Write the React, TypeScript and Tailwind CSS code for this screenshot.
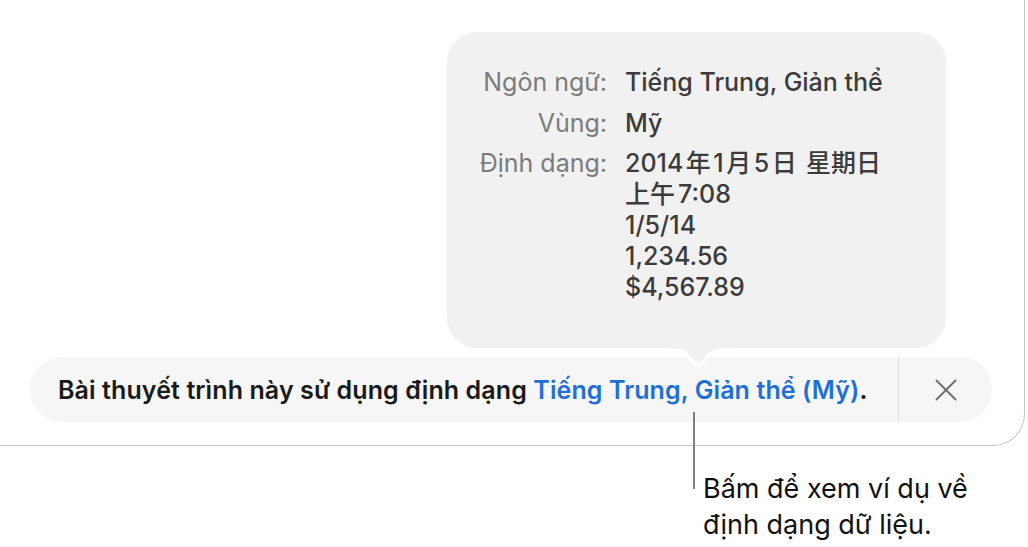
import { Fragment, type ReactNode } from "react"

// CJK glyphs get a little breathing room next to Latin digits
function Cjk({ children }: { children: ReactNode }) {
  return <span className="mx-[2.5px]">{children}</span>
}

const rows: { label: string; values: ReactNode[] }[] = [
  { label: "Ngôn ngữ:", values: ["Tiếng Trung, Giản thể"] },
  { label: "Vùng:", values: ["Mỹ"] },
  {
    label: "Định dạng:",
    values: [
      <>
        2014<Cjk>年</Cjk>1<Cjk>月</Cjk>5<Cjk>日</Cjk> 星期日
      </>,
      <>
        <span className="mr-[3px]">上午</span>7:08
      </>,
      "1/5/14",
      "1,234.56",
      "$4,567.89",
    ],
  },
]

function PopoverArrow() {
  return (
    <svg
      className="absolute left-[217px] top-[312px]"
      width="68"
      height="28"
      viewBox="-6 0 68 28"
    >
      <path
        d="M0 4 C12 4 18 7 23 15 Q28 23 33 15 C38 7 44 4 56 4 Z"
        fill="#ffffff"
        stroke="#ffffff"
        strokeWidth="7"
        strokeLinejoin="round"
      />
      <path d="M0 4 C12 4 18 7 23 15 Q28 23 33 15 C38 7 44 4 56 4 Z" fill="#f1f1f1" />
      <rect x="-6" y="0" width="68" height="4.5" fill="#f1f1f1" />
    </svg>
  )
}

function FormatPopover() {
  return (
    <div className="relative ml-[447px] h-[316px] w-[499px] rounded-[30px] bg-[#f1f1f1] pt-[35px]">
      <div className="grid grid-cols-[160px_1fr] gap-x-[18px] gap-y-[9.5px] text-[25px] leading-[31px]">
        {rows.map((row) => (
          <Fragment key={row.label}>
            <div className="text-right text-[#7b7b7b]">{row.label}</div>
            <div className="flex flex-col font-medium text-[#3b3b3b]">
              {row.values.map((v, i) => (
                <span key={i}>{v}</span>
              ))}
            </div>
          </Fragment>
        ))}
      </div>
      <PopoverArrow />
    </div>
  )
}

function FormatBar() {
  return (
    <div className="ml-[30px] mt-[9px] flex h-[65px] w-[962px] items-center rounded-full bg-[#f6f6f6]">
      <p className="flex-1 pl-[28px] text-[25px] leading-[30px] tracking-[0.1px] font-semibold text-[#1a1a1a]">
        Bài thuyết trình này sử dụng định dạng{" "}
        <span className="text-[#1f6fd6]">Tiếng Trung, Giản thể (Mỹ)</span>.
      </p>
      <div className="h-full w-px bg-[#dedede]" />
      <button className="flex h-full w-[93px] items-center justify-center">
        <svg width="22" height="22" viewBox="0 0 22 22">
          <path
            d="M1.5 1.5 20.5 20.5 M20.5 1.5 1.5 20.5"
            stroke="#707070"
            strokeWidth="2"
            strokeLinecap="round"
          />
        </svg>
      </button>
    </div>
  )
}

export default function App() {
  return (
    <div
      className="relative h-[547px] w-[1028px] overflow-hidden bg-white"
      style={{ fontFamily: 'Inter, "Noto Sans CJK SC", sans-serif' }}
    >
      <div className="h-[446px] w-[1025px] rounded-br-[32px] border-r border-b border-[#c4c4c4] pt-[32px]">
        <FormatPopover />
        <FormatBar />
      </div>

      {/* callout */}
      <div className="absolute left-[693px] top-[412px] h-[77px] w-[2px] bg-[#808080]" />
      <p className="absolute left-[703px] top-[471px] text-[27px] leading-[36px] text-[#111]">
        Bấm để xem ví dụ về
        <br />
        định dạng dữ liệu.
      </p>
    </div>
  )
}
